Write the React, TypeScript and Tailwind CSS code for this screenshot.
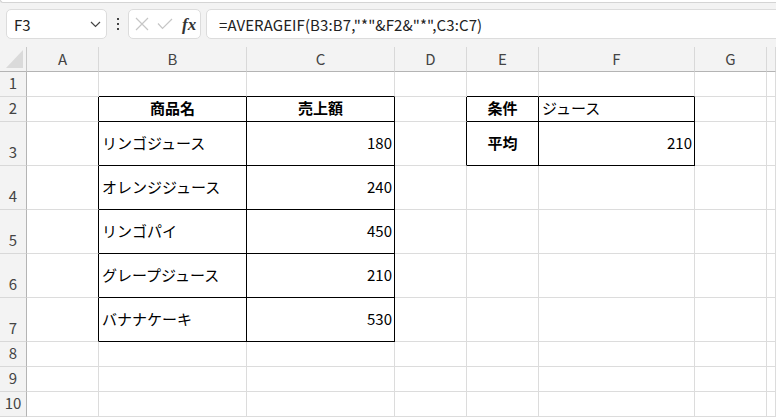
import React from "react";

type Cell = { t: string; bold?: boolean; align?: "left" | "center" | "right" };

const COLS = ["A", "B", "C", "D", "E", "F", "G", "H"];
const ROW_H = [25, 25, 44, 44, 44, 44, 44, 25, 25, 25];

const DATA: Record<string, Cell> = {
  B2: { t: "商品名", bold: true, align: "center" },
  C2: { t: "売上額", bold: true, align: "center" },
  B3: { t: "リンゴジュース" },
  C3: { t: "180", align: "right" },
  B4: { t: "オレンジジュース" },
  C4: { t: "240", align: "right" },
  B5: { t: "リンゴパイ" },
  C5: { t: "450", align: "right" },
  B6: { t: "グレープジュース" },
  C6: { t: "210", align: "right" },
  B7: { t: "バナナケーキ" },
  C7: { t: "530", align: "right" },
  E2: { t: "条件", bold: true, align: "center" },
  F2: { t: "ジュース" },
  E3: { t: "平均", bold: true, align: "center" },
  F3: { t: "210", align: "right" },
};

function inTable(r: number, c: number) {
  if (c >= 1 && c <= 2 && r >= 2 && r <= 7) return true;
  if (c >= 4 && c <= 5 && r >= 2 && r <= 3) return true;
  return false;
}

const FONT = { fontFamily: '"Noto Sans CJK JP", "Noto Sans", sans-serif' };

export default function App() {
  return (
    <div
      className="w-[776px] h-[417px] overflow-hidden bg-[#f3f3f3] flex flex-col text-black"
      style={FONT}
    >
      {/* ribbon bottom edge */}
      <div className="h-[3px] shrink-0 bg-white border-b border-l border-[#d4d4d4] rounded-bl-[4px]" />

      {/* formula bar */}
      <div className="h-[30px] mt-[6px] shrink-0 flex items-stretch pl-[6px]">
        <div className="w-[101px] shrink-0 bg-white border border-[#dcdcdc] rounded-[5px] flex items-center justify-between pl-[7px] pr-[5px]">
          <span className="text-[15px] leading-none text-[#222]">F3</span>
          <svg width="11" height="7" viewBox="0 0 11 7" className="mt-[1px]">
            <path d="M1 1 L5.5 5.5 L10 1" fill="none" stroke="#444" strokeWidth="1.2" />
          </svg>
        </div>
        <div className="w-[21px] shrink-0 flex flex-col items-center justify-center gap-[3px]">
          <div className="w-[2px] h-[2px] bg-[#444]" />
          <div className="w-[2px] h-[2px] bg-[#444]" />
          <div className="w-[2px] h-[2px] bg-[#444]" />
        </div>
        <div className="w-[73px] shrink-0 bg-white border border-[#dcdcdc] rounded-[5px] flex items-center pl-[6px]">
          <svg width="14" height="14" viewBox="0 0 14 14">
            <path d="M1 1 L13 13 M13 1 L1 13" stroke="#c6c6c6" strokeWidth="1.2" fill="none" />
          </svg>
          <svg width="16" height="12" viewBox="0 0 16 12" className="ml-[8px]">
            <path d="M1 5.5 L5.5 10.5 L15 1" stroke="#c6c6c6" strokeWidth="1.2" fill="none" />
          </svg>
          <span
            className="ml-[9px] text-[17px] leading-none italic text-[#333] font-semibold"
            style={{ fontFamily: '"Liberation Serif", "DejaVu Serif", serif' }}
          >
            fx
          </span>
        </div>
        <div className="ml-[5px] w-[620px] shrink-0 bg-white border border-[#dcdcdc] rounded-[5px] flex items-center pl-[12px]">
          <span className="text-[15px] leading-none text-[#222] tracking-[0.1px]">
            =AVERAGEIF(B3:B7,"*"&amp;F2&amp;"*",C3:C7)
          </span>
        </div>
      </div>

      <div className="h-[8px] shrink-0" />

      {/* sheet grid */}
      <div className="grid grid-cols-[27px_72px_148px_148px_72px_72px_156px_72px_1fr] grid-rows-[25px_25px_25px_44px_44px_44px_44px_44px_25px_25px_25px]">
        {/* corner */}
        <div className="border-r border-b border-r-[#c8c8c8] border-b-[#b4b4b4] bg-[#f3f3f3] relative">
          <svg width="17" height="18" viewBox="0 0 17 18" className="absolute left-[6px] top-[3px]">
            <path d="M17 0 L17 18 L0 18 Z" fill="#dadada" />
          </svg>
        </div>
        {COLS.map((c) => (
          <div
            key={c}
            className="border-r border-b border-r-[#d8d8d8] border-b-[#b4b4b4] bg-[#f3f3f3] flex items-center justify-center text-[15px] text-[#444] leading-none pb-[2px]"
          >
            {c === "H" ? "" : c}
          </div>
        ))}

        {ROW_H.map((h, ri) => {
          const r = ri + 1;
          return (
            <React.Fragment key={r}>
              <div className="border-r border-b border-r-[#b4b4b4] border-b-[#d8d8d8] bg-[#f3f3f3] flex items-end justify-center pb-[3px] text-[15px] leading-[20px] text-[#444]">
                {r}
              </div>
              {COLS.map((col, ci) => {
                const key = `${col}${r}`;
                const cell = DATA[key];
                const rb = inTable(r, ci) || inTable(r, ci + 1);
                const bb = inTable(r, ci) || inTable(r + 1, ci);
                const align = cell?.align ?? "left";
                return (
                  <div
                    key={key}
                    className={`bg-white border-r border-b flex items-center pb-[2px] overflow-hidden whitespace-nowrap text-[15px] leading-[20px] ${
                      rb ? "border-r-black" : "border-r-[#dcdcdc]"
                    } ${bb ? "border-b-black" : "border-b-[#dcdcdc]"} ${
                      align === "right"
                        ? "justify-end pr-[2px]"
                        : align === "center"
                        ? "justify-center"
                        : "justify-start pl-[3px]"
                    } ${cell?.bold ? "font-bold" : "font-normal"}`}
                  >
                    {cell ? cell.t : ""}
                  </div>
                );
              })}
            </React.Fragment>
          );
        })}
      </div>
    </div>
  );
}
